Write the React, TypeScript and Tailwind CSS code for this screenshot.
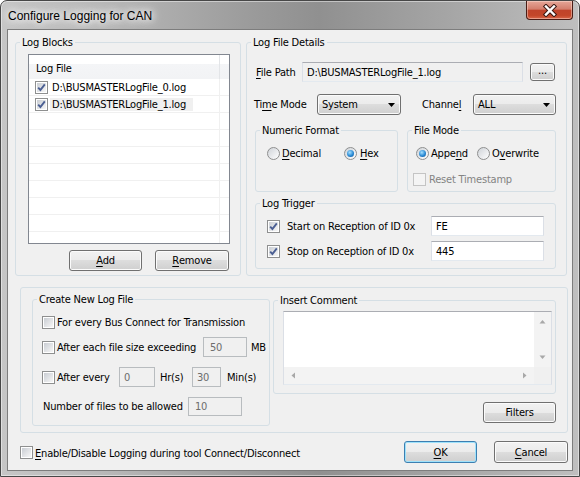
import React from "react";

function Check({ on, off }: { on?: boolean; off?: boolean }) {
  return (
    <span
      className={`relative flex h-[13px] w-[13px] shrink-0 items-center justify-center border ${
        off ? "border-[#c4c4c4] bg-[#f4f4f4]" : "border-[#8e8f8f] bg-white"
      }`}
    >
      <span
        className={`h-[9px] w-[9px] ${
          off ? "bg-[#f4f4f4]" : "bg-[linear-gradient(135deg,#c9cdd3,#f7f7f7)]"
        }`}
      />
      {on && (
        <svg className="absolute left-0 top-0" width="11" height="11" viewBox="0 0 11 11">
          <path d="M2.2 5.6 L4.4 8 L8.8 2.4" fill="none" stroke="#4b5f93" strokeWidth="1.9" />
        </svg>
      )}
    </span>
  );
}

function Radio({ on }: { on?: boolean }) {
  return (
    <span className="flex h-[13px] w-[13px] shrink-0 items-center justify-center rounded-full border border-[#8e8f8f] bg-[linear-gradient(135deg,#cfd3d8,#ffffff)]">
      {on && (
        <span className="h-[7px] w-[7px] rounded-full bg-[radial-gradient(circle_at_40%_35%,#a6e0ff,#2a8ad4_55%,#0b4e8e)]" />
      )}
    </span>
  );
}

function Btn({ children, className = "", def }: { children: React.ReactNode; className?: string; def?: boolean }) {
  return (
    <button
      type="button"
      className={`flex shrink-0 items-center justify-center rounded-[3px] border bg-[linear-gradient(#f2f2f2_0%,#ebebeb_50%,#dddddd_50%,#cfcfcf_100%)] ${
        def ? "border-[#3c7fb1] shadow-[inset_0_0_0_1px_#9fe2fb]" : "border-[#707070] shadow-[inset_0_0_0_1px_#fbfbfb]"
      } ${className}`}
    >
      {children}
    </button>
  );
}

function Edit({ v, off, ro, className = "" }: { v: string; off?: boolean; ro?: boolean; className?: string }) {
  return (
    <div
      className={`flex shrink-0 items-center border px-[4px] ${
        off
          ? "border-[#b8bcbf] bg-[#f0f0f0] text-[#6d6d6d]"
          : ro
          ? "border-[#abadb3] border-x-[#dbdfe6] border-b-[#e3e9ef] bg-[#f0f0f0]"
          : "border-[#abadb3] border-x-[#dbdfe6] border-b-[#e3e9ef] bg-white"
      } ${className}`}
    >
      {v}
    </div>
  );
}

function Combo({ v, className = "" }: { v: string; className?: string }) {
  return (
    <div
      className={`flex shrink-0 items-center justify-between rounded-[3px] border border-[#707070] bg-[linear-gradient(#f2f2f2_0%,#ebebeb_50%,#dddddd_50%,#cfcfcf_100%)] pl-[4px] pr-[5px] shadow-[inset_0_0_0_1px_#fbfbfb] ${className}`}
    >
      <span>{v}</span>
      <svg width="7" height="4" viewBox="0 0 7 4">
        <path d="M0 0H7L3.5 4Z" fill="#000" />
      </svg>
    </div>
  );
}

function Group({ label, className = "", children }: { label: string; className?: string; children?: React.ReactNode }) {
  return (
    <fieldset className={`shrink-0 rounded-[3px] border border-[#d5dfe5] ${className}`}>
      <legend className="ml-[4px] px-[2px] leading-[13px]">{label}</legend>
      {children}
    </fieldset>
  );
}

function U({ children }: { children: React.ReactNode }) {
  return <span className="underline decoration-1 underline-offset-[2px]">{children}</span>;
}

function Tri({ d }: { d: string }) {
  return (
    <svg width="7" height="7" viewBox="0 0 7 7">
      <path d={d} fill="#a8a8a8" />
    </svg>
  );
}

const files = ["D:\\BUSMASTERLogFile_0.log", "D:\\BUSMASTERLogFile_1.log"];

export default function App() {
  const rows = [...files, "", "", "", "", "", "", "", ""];

  return (
    <div className="flex h-[477px] w-[580px] flex-col whitespace-nowrap rounded-t-[7px] border border-[#474747] bg-[linear-gradient(to_right,#c6c6c6_0%,#b6b6b6_20%,#999999_45%,#909090_55%,#a6a6a6_78%,#bfbfbf_100%)] font-['DejaVu_Sans_Condensed','DejaVu_Sans',sans-serif] text-[11px] leading-[13px] tracking-[-0.2px] text-black shadow-[inset_0_0_0_1px_rgba(255,255,255,0.45)] font-stretch-condensed">
      {/* title bar */}
      <div className="flex h-[28px] shrink-0 items-start">
        <div className="ml-[7px] mt-[8px] font-['Liberation_Sans',sans-serif] text-[12px] leading-[15px] tracking-normal font-stretch-normal [text-shadow:0_0_6px_#fff,0_0_10px_#fff,0_0_14px_#fff]">
          Configure Logging for CAN
        </div>
        <div className="ml-auto mr-[6px] flex h-[19px] w-[47px] items-center justify-center rounded-b-[4px] border border-t-0 border-[#4a1d16] bg-[linear-gradient(#e6a698_0%,#d47e6c_45%,#c0432a_52%,#c34629_80%,#d9674a_100%)] shadow-[inset_0_0_0_1px_rgba(255,230,220,0.45)]">
          <svg width="16" height="13" viewBox="0 0 16 13">
            <path d="M4 2.5 L12 10.5 M12 2.5 L4 10.5" stroke="#3a1812" strokeWidth="4.4" strokeLinecap="square" />
            <path d="M4 2.5 L12 10.5 M12 2.5 L4 10.5" stroke="#ffffff" strokeWidth="2.4" strokeLinecap="square" />
          </svg>
        </div>
      </div>

      {/* client area */}
      <div className="ml-[6px] flex h-[442px] w-[566px] flex-col border border-[#7d7d7d] bg-[#f0f0f0]">
        <div className="mt-[6px] flex h-[240px] pl-[7px]">
          {/* Log Blocks */}
          <Group label="Log Blocks" className="h-[240px] w-[226px]">
            <div className="pl-[12px] pt-[5px]">
              <div className="flex h-[190px] w-[202px] flex-col overflow-hidden border border-[#828790] bg-white">
                <div className="flex h-[24px] shrink-0 bg-[linear-gradient(#ffffff_0%,#ffffff_36%,#f4f5f7_37%,#f2f3f5_100%)]">
                  <div className="flex w-[191px] items-center border-r border-[#e3e5e8] pl-[7px] pt-[3px]">Log File</div>
                </div>
                {rows.map((r, i) => (
                  <div key={i} className="flex h-[17px] shrink-0 border-b border-[#f0f0f0]">
                    <div className="flex w-[191px] items-center border-r border-[#f0f0f0]">
                      {r && (
                        <>
                          <span className="ml-[6px]">
                            <Check on />
                          </span>
                          <span className={`ml-[2px] pl-[2px] pr-[7px] ${i === 1 ? "bg-[#f0f0f0]" : ""}`}>{r}</span>
                        </>
                      )}
                    </div>
                  </div>
                ))}
              </div>
              <div className="mt-[6px] flex w-[202px] justify-end gap-[13px] pr-[1px]">
                <Btn className="h-[21px] w-[73px]">
                  <U>A</U>dd
                </Btn>
                <Btn className="h-[21px] w-[74px]">
                  <U>R</U>emove
                </Btn>
              </div>
            </div>
          </Group>

          {/* Log File Details */}
          <Group label="Log File Details" className="ml-[5px] h-[240px] w-[321px]">
            <div className="flex flex-col pl-[8px]">
              <div className="mt-[13px] flex h-[20px] items-center">
                <span className="ml-[1px] w-[46px] shrink-0">
                  <U>F</U>ile Path
                </span>
                <Edit v="D:\BUSMASTERLogFile_1.log" ro className="h-[20px] w-[221px]" />
                <Btn className="ml-[7px] h-[18px] w-[25px] pb-[3px]">...</Btn>
              </div>
              <div className="mt-[12px] flex h-[21px] items-center">
                <span className="-ml-[1px] w-[63px] shrink-0">
                  Ti<U>m</U>e Mode
                </span>
                <Combo v="System" className="h-[21px] w-[84px]" />
                <span className="ml-[21px] w-[51px] shrink-0">
                  Channe<U>l</U>
                </span>
                <Combo v="ALL" className="h-[21px] w-[83px] pl-[3px]" />
              </div>
              <div className="mt-[9px] flex gap-[9px]">
                <Group label="Numeric Format" className="h-[68px] w-[143px]">
                  <div className="flex pl-[11px] pt-[10px]">
                    <div className="flex w-[77px] shrink-0 items-center">
                      <Radio />
                      <span className="ml-[2px]">
                        <U>D</U>ecimal
                      </span>
                    </div>
                    <div className="flex items-center">
                      <Radio on />
                      <span className="ml-[3px]">
                        <U>H</U>ex
                      </span>
                    </div>
                  </div>
                </Group>
                <Group label="File Mode" className="h-[68px] w-[149px]">
                  <div className="flex flex-col pl-[8px] pt-[10px]">
                    <div className="flex">
                      <div className="flex w-[61px] shrink-0 items-center">
                        <Radio on />
                        <span className="ml-[2px]">
                          Appe<U>n</U>d
                        </span>
                      </div>
                      <div className="flex items-center">
                        <Radio />
                        <span className="ml-[2px]">
                          O<U>v</U>erwrite
                        </span>
                      </div>
                    </div>
                    <div className="-ml-[3px] mt-[13px] flex items-center text-[#838383]">
                      <Check off />
                      <span className="ml-[3px]">Reset Timestamp</span>
                    </div>
                  </div>
                </Group>
              </div>
              <Group label="Log Trigger" className="mt-[5px] h-[72px] w-[301px]">
                <div className="flex flex-col pl-[11px]">
                  <div className="mt-[6px] flex h-[20px] items-center">
                    <div className="flex w-[164px] shrink-0 items-center">
                      <Check on />
                      <span className="ml-[7px]">Start on Reception of ID 0x</span>
                    </div>
                    <Edit v="FE" className="h-[20px] w-[113px]" />
                  </div>
                  <div className="mt-[5px] flex h-[20px] items-center">
                    <div className="flex w-[164px] shrink-0 items-center">
                      <Check on />
                      <span className="ml-[7px]">Stop on Reception of ID 0x</span>
                    </div>
                    <Edit v="445" className="h-[20px] w-[113px]" />
                  </div>
                </div>
              </Group>
            </div>
          </Group>
        </div>

        {/* lower section */}
        <div className="ml-[12px] mt-[11px] flex h-[146px] w-[548px] shrink-0 gap-[3px] rounded-[3px] border border-[#d5dfe5] pl-[11px] pt-[5px]">
          <Group label="Create New Log File" className="h-[133px] w-[238px]">
            <div className="flex flex-col pl-[9px]">
              <div className="mt-[6px] flex h-[20px] items-center">
                <Check />
                <span className="ml-[2px]">For every Bus Connect for Transmission</span>
              </div>
              <div className="mt-[5px] flex h-[20px] items-center">
                <div className="flex w-[161px] shrink-0 items-center">
                  <Check />
                  <span className="ml-[2px]">After each file size exceeding</span>
                </div>
                <Edit v="50" off className="h-[20px] w-[44px] pl-[6px]" />
                <span className="ml-[4px]">MB</span>
              </div>
              <div className="mt-[10px] flex h-[20px] items-center">
                <div className="flex w-[77px] shrink-0 items-center">
                  <Check />
                  <span className="ml-[2px]">After every</span>
                </div>
                <Edit v="0" off className="h-[20px] w-[36px] pl-[4px]" />
                <span className="w-[37px] shrink-0 pl-[5px]">Hr(s)</span>
                <Edit v="30" off className="h-[20px] w-[29px] pl-[4px]" />
                <span className="ml-[6px]">Min(s)</span>
              </div>
              <div className="mt-[10px] flex h-[19px] items-center">
                <span className="w-[146px] shrink-0 pl-[1px]">Number of files to be allowed</span>
                <Edit v="10" off className="h-[19px] w-[54px] pl-[6px]" />
              </div>
            </div>
          </Group>

          <div className="flex w-[283px] flex-col">
            <Group label="Insert Comment" className="mt-[1px] h-[100px] w-[283px]">
              <div className="pl-[9px] pt-[4px]">
                <div className="flex h-[74px] w-[269px] flex-col border border-[#abadb3] border-x-[#dbdfe6] border-b-[#e3e9ef] bg-white">
                  <div className="flex h-[55px]">
                    <div className="flex-1" />
                    <div className="flex w-[17px] flex-col items-center justify-between bg-[#f3f3f3] py-[6px]">
                      <Tri d="M0.5 5.5H6.5L3.5 2Z" />
                      <Tri d="M0.5 1.5H6.5L3.5 5Z" />
                    </div>
                  </div>
                  <div className="flex h-[17px]">
                    <div className="flex flex-1 items-center justify-between bg-[#f3f3f3] px-[6px]">
                      <Tri d="M5 0.5V6.5L1.5 3.5Z" />
                      <Tri d="M2 0.5V6.5L5.5 3.5Z" />
                    </div>
                    <div className="w-[17px] bg-[#f0f0f0]" />
                  </div>
                </div>
              </div>
            </Group>
            <Btn className="mt-[8px] h-[21px] w-[73px] self-end">Filters</Btn>
          </div>
        </div>

        {/* bottom row */}
        <div className="mt-[8px] flex h-[22px] items-center pl-[12px] pr-[4px]">
          <Check />
          <span className="ml-[2px] pt-[2px]">
            <U>E</U>nable/Disable Logging during tool Connect/Disconnect
          </span>
          <Btn def className="ml-auto h-[22px] w-[73px]">
            <U>O</U>K
          </Btn>
          <Btn className="ml-[17px] h-[22px] w-[74px]">
            <U>C</U>ancel
          </Btn>
        </div>
      </div>
    </div>
  );
}
